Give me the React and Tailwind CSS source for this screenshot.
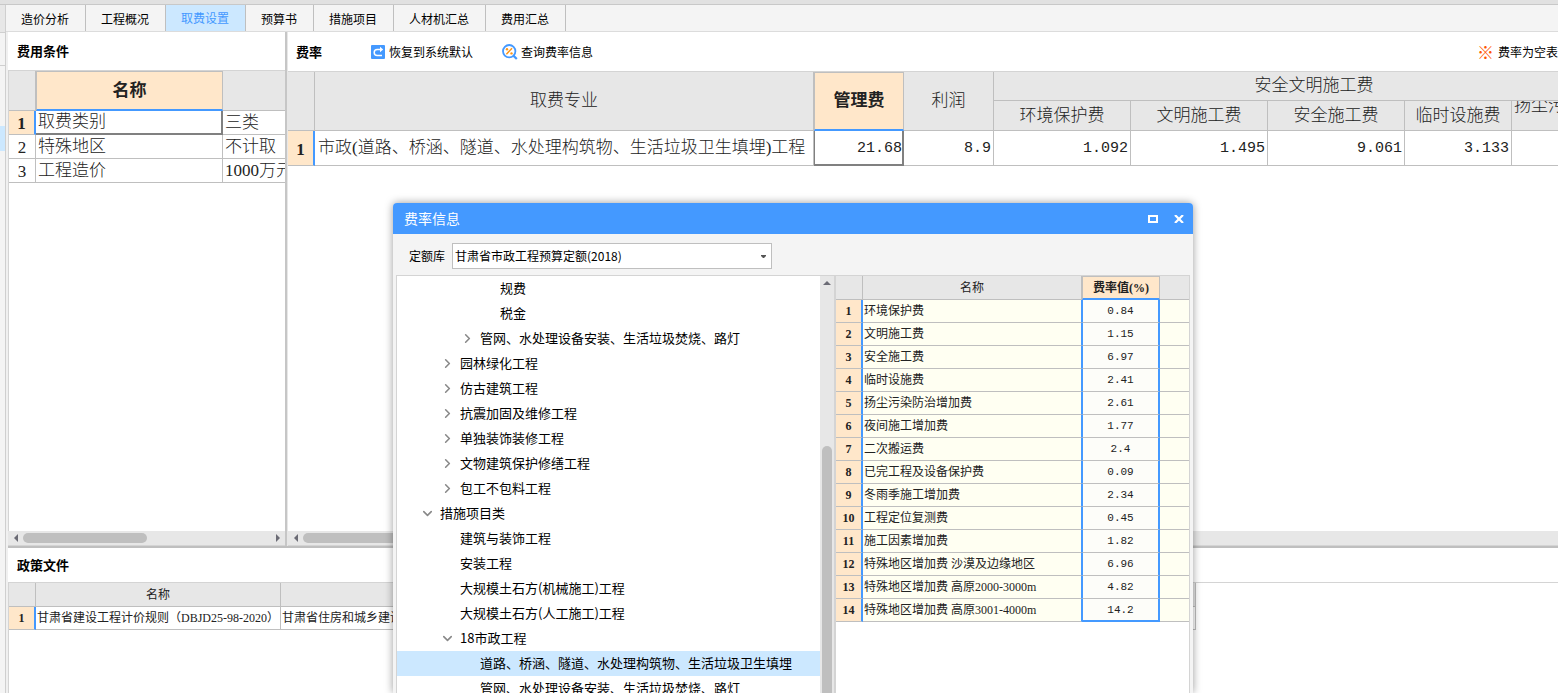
// src/pages/FeeSettings.jsx
import { useState } from 'react';
import { ChevronDown, ChevronRight } from 'lucide-react';

const TABS = ['造价分析', '工程概况', '取费设置', '预算书', '措施项目', '人材机汇总', '费用汇总'];

const CONDITIONS = [
  { name: '取费类别', value: '三类' },
  { name: '特殊地区', value: '不计取' },
  { name: '工程造价', value: '1000万元' },
];

const SAFETY_FEES = [
  { name: '环境保护费', value: '1.092' },
  { name: '文明施工费', value: '1.495' },
  { name: '安全施工费', value: '9.061' },
  { name: '临时设施费', value: '3.133' },
];

const RATES = [
  ['环境保护费', '0.84'],
  ['文明施工费', '1.15'],
  ['安全施工费', '6.97'],
  ['临时设施费', '2.41'],
  ['扬尘污染防治增加费', '2.61'],
  ['夜间施工增加费', '1.77'],
  ['二次搬运费', '2.4'],
  ['已完工程及设备保护费', '0.09'],
  ['冬雨季施工增加费', '2.34'],
  ['工程定位复测费', '0.45'],
  ['施工因素增加费', '1.82'],
  ['特殊地区增加费 沙漠及边缘地区', '6.96'],
  ['特殊地区增加费 高原2000-3000m', '4.82'],
  ['特殊地区增加费 高原3001-4000m', '14.2'],
];

const TREE = [
  { label: '规费', pad: 'pl-[83px]' },
  { label: '税金', pad: 'pl-[83px]' },
  { label: '管网、水处理设备安装、生活垃圾焚烧、路灯', pad: 'pl-[63px]', state: 'closed' },
  { label: '园林绿化工程', pad: 'pl-[43px]', state: 'closed' },
  { label: '仿古建筑工程', pad: 'pl-[43px]', state: 'closed' },
  { label: '抗震加固及维修工程', pad: 'pl-[43px]', state: 'closed' },
  { label: '单独装饰装修工程', pad: 'pl-[43px]', state: 'closed' },
  { label: '文物建筑保护修缮工程', pad: 'pl-[43px]', state: 'closed' },
  { label: '包工不包料工程', pad: 'pl-[43px]', state: 'closed' },
  { label: '措施项目类', pad: 'pl-[23px]', state: 'open' },
  { label: '建筑与装饰工程', pad: 'pl-[43px]' },
  { label: '安装工程', pad: 'pl-[43px]' },
  { label: '大规模土石方(机械施工)工程', pad: 'pl-[43px]' },
  { label: '大规模土石方(人工施工)工程', pad: 'pl-[43px]' },
  { label: '18市政工程', pad: 'pl-[43px]', state: 'open' },
  { label: '道路、桥涵、隧道、水处理构筑物、生活垃圾卫生填埋', pad: 'pl-[63px]' },
  { label: '管网、水处理设备安装、生活垃圾焚烧、路灯', pad: 'pl-[63px]' },
];

const gridFont = "font-['Liberation_Serif','Noto_Sans_CJK_SC',sans-serif]";
const monoFont = "font-['Liberation_Mono','Noto_Sans_CJK_SC',monospace]";
const tableClass = 'table-fixed border-separate border-spacing-0 text-[#222222]';
const headCell = 'border-r border-b border-[#bfbfbf] bg-[#e7e7e7] p-0 [font-weight:inherit]';
const bodyCell = 'border-r border-b border-[#bfbfbf] p-0';
const activeHead = 'border border-b-2 border-[#bfbfbf] border-b-[#4499ff] bg-[#ffe7ca] p-0 font-bold';
const activeNum = 'border-r-2 border-b border-b-[#bfbfbf] border-r-[#4499ff] bg-[#ffe7ca] p-0 font-bold';

function RestoreIcon() {
  return (
    <svg width="14" height="14" viewBox="0 0 14 14" aria-hidden="true">
      <rect width="14" height="14" rx="1" fill="#4499ff" />
      <path d="M10 4.500H6.200a3 3 0 0 0 0 6H11" fill="none" stroke="#fff" strokeWidth="1.500" />
      <path d="M9 1.800 12.200 4.500 9 7.200z" fill="#fff" />
    </svg>
  );
}

function QueryIcon() {
  return (
    <svg width="16" height="16" viewBox="0 0 16 16" fill="none" aria-hidden="true">
      <circle cx="7.2" cy="7.2" r="6.2" stroke="#4499ff" strokeWidth="1.8" />
      <path d="m11.400 11.600 3.400 3.400" stroke="#4499ff" strokeWidth="2.2" />
      <path d="M4.400 10.200 10 4.200" stroke="#ff9412" strokeWidth="1.5" />
      <circle cx="5" cy="5.2" r="1.2" fill="#ff9412" />
      <circle cx="9.5" cy="9.4" r="1.2" fill="#ff9412" />
    </svg>
  );
}

function Arrow({ d }) {
  return (
    <svg width="8" height="8" viewBox="0 0 8 8" className="shrink-0" aria-hidden="true">
      <path d={d} fill="#6b6b75" />
    </svg>
  );
}

function HScroll({ thumb, children }) {
  return (
    <div className="flex h-[15px] shrink-0 items-center border-b border-[#d4d4d4] bg-[#e7e7e7] pr-[3px] pl-1">
      <Arrow d="M6 0v8L2 4z" />
      <div className={`ml-[3px] h-[10px] rounded-full bg-[#bfbfbf] ${thumb}`} />
      <div className="flex-1" />
      {children}
    </div>
  );
}

function ConditionPanel() {
  return (
    <section className="flex w-[279px] shrink-0 flex-col border-r-2 border-[#c6c6c6]">
      <h2 className="h-[38px] px-[9px] text-[13px] leading-[38px] font-bold">费用条件</h2>
      <div className="flex-1 overflow-hidden border-t border-l border-[#d4d4d4]">
        <table className={`${tableClass} ${gridFont} w-[336px] text-[17px] leading-[22px] font-light`}>
          <colgroup>
            <col className="w-[27px]" />
            <col className="w-[187px]" />
            <col />
          </colgroup>
          <thead>
            <tr className="h-[40px]">
              <th className={headCell} />
              <th className={activeHead}>名称</th>
              <th className={headCell} />
            </tr>
          </thead>
          <tbody>
            {CONDITIONS.map((row, i) => (
              <tr key={row.name} className="h-[24px]">
                <td className={`text-center ${i === 0 ? activeNum : bodyCell}`}>
                  <div className="h-[23px] pt-[2px] leading-[21px]">{i + 1}</div>
                </td>
                <td className={i === 0 ? 'border-r-2 border-b-2 border-[#808080] p-0 pl-[2px]' : `${bodyCell} pl-[2px]`}>
                  {row.name}
                </td>
                <td className={`${bodyCell} pl-[2px] whitespace-nowrap`}>{row.value}</td>
              </tr>
            ))}
          </tbody>
        </table>
      </div>
      <HScroll thumb="w-[124px]">
        <Arrow d="M2 0v8l4-4z" />
      </HScroll>
    </section>
  );
}

function RatePanel({ onQuery }) {
  return (
    <section className="flex min-w-0 flex-1 flex-col border-l border-[#e7e7e7]">
      <div className="flex h-[40px] shrink-0 items-center overflow-hidden border-b border-[#d4d4d4] pl-[8px] text-[12px]">
        <h2 className="w-[75px] text-[13px] font-bold">费率</h2>
        <button type="button" className="flex w-[131px] items-center gap-1">
          <RestoreIcon />
          恢复到系统默认
        </button>
        <button type="button" onClick={onQuery} className="flex items-center gap-[3px]">
          <QueryIcon />
          查询费率信息
        </button>
        <p className="ml-auto flex items-center gap-[4px] whitespace-nowrap">
          <span className="text-[17px] leading-[17px] text-[#ff5500]">※</span>
          费率为空表
        </p>
      </div>
      <div className="flex-1 overflow-hidden">
        <table className={`${tableClass} ${gridFont} w-[1347px] text-[17px] font-light`}>
          <colgroup>
            <col className="w-[27px]" />
            <col className="w-[499px]" />
            <col className="w-[90px]" />
            <col className="w-[90px]" />
            <col className="w-[137px]" />
            <col className="w-[137px]" />
            <col className="w-[137px]" />
            <col className="w-[107px]" />
            <col className="w-[123px]" />
          </colgroup>
          <thead>
            <tr className="h-[29px]">
              <th rowSpan={2} className={headCell} />
              <th rowSpan={2} className={headCell}>取费专业</th>
              <th rowSpan={2} className={activeHead}>管理费</th>
              <th rowSpan={2} className={headCell}>利润</th>
              <th colSpan={5} className={headCell}>安全文明施工费</th>
            </tr>
            <tr className="h-[30px]">
              {SAFETY_FEES.map((fee) => (
                <th key={fee.name} className={headCell}>{fee.name}</th>
              ))}
              <th className={headCell}>
                <div className="h-[29px] overflow-hidden pl-[2px] text-left leading-[10px] whitespace-nowrap">
                  扬尘污
                </div>
              </th>
            </tr>
          </thead>
          <tbody>
            <tr className="h-[35px] text-right">
              <td className={`text-center ${activeNum}`}>
                <div className="pt-[3px]">1</div>
              </td>
              <td className={`${bodyCell} pl-[3px] text-left whitespace-nowrap`}>
                市政(道路、桥涵、隧道、水处理构筑物、生活垃圾卫生填埋)工程
              </td>
              <td className={`${monoFont} border-r-2 border-b-2 border-l border-[#808080] p-0 text-[15px]`}>
                <div className="pt-[4px]">21.68</div>
              </td>
              <td className={`${monoFont} ${bodyCell} text-[15px]`}>
                <div className="pt-[3px] pr-[2px]">8.9</div>
              </td>
              {SAFETY_FEES.map((fee) => (
                <td key={fee.name} className={`${monoFont} ${bodyCell} text-[15px]`}>
                  <div className="pt-[3px] pr-[2px]">{fee.value}</div>
                </td>
              ))}
              <td className={bodyCell} />
            </tr>
          </tbody>
        </table>
      </div>
      <HScroll thumb="w-[400px]" />
    </section>
  );
}

function PolicyPanel() {
  return (
    <section className="h-[147px] shrink-0 overflow-hidden border-t-2 border-[#bfbfbf]">
      <h2 className="h-[34px] px-[9px] text-[13px] leading-[34px] font-bold">政策文件</h2>
      <div className="h-full border-t border-l border-[#d4d4d4]">
        <table className={`${tableClass} ${gridFont} w-[1187px] text-[12px] leading-[18px] font-normal`}>
          <colgroup>
            <col className="w-[27px]" />
            <col className="w-[245px]" />
            <col />
          </colgroup>
          <thead>
            <tr className="h-[24px]">
              <th className={headCell} />
              <th className={headCell}>名称</th>
              <th className={headCell} />
            </tr>
          </thead>
          <tbody>
            <tr className="h-[23px]">
              <td className={`text-center ${activeNum}`}>1</td>
              <td className={`${bodyCell} pl-[1px] whitespace-nowrap`}>甘肃省建设工程计价规则（DBJD25-98-2020）</td>
              <td className={`${bodyCell} pl-[1px]`}>甘肃省住房和城乡建设厅</td>
            </tr>
          </tbody>
        </table>
      </div>
    </section>
  );
}

function RateTree() {
  const [selected, setSelected] = useState(15);

  return (
    <div className="flex w-[438px] shrink-0 border-t border-l border-[#d4d4d4] bg-white">
      <ul className="flex-1 overflow-hidden text-[13px]">
        {TREE.map((node, i) => (
          <li key={i}>
            <button
              type="button"
              onClick={() => setSelected(i)}
              className={`flex h-[25px] w-full items-center pb-[1px] whitespace-nowrap ${node.pad} ${selected === i ? 'bg-[#cce8ff]' : ''}`}
            >
              <span className="flex w-[20px] shrink-0 text-[#888888]">
                {node.state === 'closed' && <ChevronRight size={15} strokeWidth={2.5} />}
                {node.state === 'open' && <ChevronDown size={15} strokeWidth={2.5} />}
              </span>
              {node.label}
            </button>
          </li>
        ))}
      </ul>
      <div className="flex w-[14px] flex-col items-center bg-[#e7e7e7] pt-[3px]">
        <Arrow d="M0 6h8L4 2z" />
        <div className="mt-[159px] w-[10px] flex-1 rounded-t-full bg-[#bfbfbf]" />
      </div>
    </div>
  );
}

function RateDialog({ onClose }) {
  return (
    <div
      role="dialog"
      aria-label="费率信息"
      className="absolute top-[203px] bottom-0 left-[393px] flex w-[800px] flex-col overflow-hidden rounded-t-[4px] bg-[#f4f4f4] shadow-[0_0_8px_rgba(0,0,0,0.4)]"
    >
      <header className="flex h-[31px] shrink-0 items-center bg-[#4499ff] px-[9px] text-white">
        <h2 className="flex-1 pl-[2px] text-[14px]">费率信息</h2>
        <button type="button" aria-label="最大化" className="mr-[16px]">
          <svg width="10" height="8" viewBox="0 0 10 8" fill="none">
            <rect x="1" y="1" width="8" height="6" stroke="#fff" strokeWidth="2" />
          </svg>
        </button>
        <button type="button" aria-label="关闭" onClick={onClose}>
          <svg width="10" height="8" viewBox="0 0 10 8" fill="none">
            <path d="M1 0l8 8M9 0L1 8" stroke="#fff" strokeWidth="2.2" />
          </svg>
        </button>
      </header>
      <div className="flex h-[41px] shrink-0 items-center gap-[7px] pt-[3px] pl-[16px] text-[12px]">
        <label htmlFor="library">定额库</label>
        <div className="relative">
          <select
            id="library"
            className="h-[26px] w-[320px] appearance-none border border-[#bfbfbf] bg-white pl-[2px]"
          >
            <option>甘肃省市政工程预算定额(2018)</option>
          </select>
          <svg width="5" height="3" viewBox="0 0 5 3" className="pointer-events-none absolute top-[12px] right-[6px]">
            <path d="M0 0h5v1L3 3H2L0 1z" fill="#555" />
          </svg>
        </div>
      </div>
      <div className="flex min-h-0 flex-1 px-[3px]">
        <RateTree />
        <div className="flex-1 overflow-hidden border-x border-t border-l-2 border-[#d4d4d4] bg-white">
          <table className={`${tableClass} ${gridFont} w-full text-[12px] leading-[18px] font-normal`}>
            <colgroup>
              <col className="w-[27px]" />
              <col className="w-[219px]" />
              <col className="w-[78px]" />
              <col />
            </colgroup>
            <thead>
              <tr className="h-[24px]">
                <th className={headCell} />
                <th className={headCell}>名称</th>
                <th className={activeHead}>费率值(%)</th>
                <th className="border-b border-[#bfbfbf] bg-[#e7e7e7] p-0" />
              </tr>
            </thead>
            <tbody>
              {RATES.map(([name, value], i) => (
                <tr key={name} className="h-[23px] bg-[#fffff2]">
                  <td className={`text-center ${activeNum}`}>{i + 1}</td>
                  <td className="border-r border-b border-r-[#4499ff] border-b-[#bfbfbf] p-0 pl-[1px] whitespace-nowrap">
                    {name}
                  </td>
                  <td
                    className={`${monoFont} border-r-2 border-l border-[#4499ff] bg-[#fdfdf9] p-0 text-center text-[11px] ${
                      i === RATES.length - 1 ? 'border-b-2' : 'border-b border-b-[#bfbfbf]'
                    }`}
                  >
                    {value}
                  </td>
                  <td className="border-b border-[#bfbfbf] p-0" />
                </tr>
              ))}
            </tbody>
          </table>
        </div>
      </div>
    </div>
  );
}

export default function App() {
  const [tab, setTab] = useState('取费设置');
  const [open, setOpen] = useState(true);

  return (
    <div className="relative flex h-screen flex-col overflow-hidden bg-white font-['Noto_Sans_CJK_SC',sans-serif] text-black">
      <div className="h-[5px] shrink-0 border-b border-[#c8c8c8] bg-[#e1e1e1]" />
      <div className="flex min-h-0 flex-1">
        {/* collapsed side bar */}
        <aside className="w-[6px] shrink-0 border-r border-[#cfcfcf] bg-[#f4f4f4]">
          <div className="h-[28px] border-b border-[#cfcfcf] bg-[#e7e7e7]" />
          <div className="h-[33px] border-b border-[#cfcfcf]" />
          <div className="mt-[60px] h-[25px] bg-[#cce8ff]" />
        </aside>
        <div className="flex min-w-0 flex-1 flex-col">
          <nav className="flex h-[27px] shrink-0 border-b border-[#dcdcdc] bg-[#f4f4f4] text-[12px]">
            {TABS.map((name) => (
              <button
                key={name}
                type="button"
                onClick={() => setTab(name)}
                className={`border-r border-[#bfbfbf] pr-[16px] pl-[15px] ${
                  tab === name ? 'bg-[#cce8ff] text-[#4499ff]' : 'pt-[2px]'
                }`}
              >
                {name}
              </button>
            ))}
          </nav>
          <main className="flex min-h-0 flex-1 flex-col border-l-2 border-[#f0f0f0]">
            <div className="flex min-h-0 flex-1">
              <ConditionPanel />
              <RatePanel onQuery={() => setOpen(true)} />
            </div>
            <PolicyPanel />
          </main>
        </div>
      </div>
      {open && <RateDialog onClose={() => setOpen(false)} />}
    </div>
  );
}
